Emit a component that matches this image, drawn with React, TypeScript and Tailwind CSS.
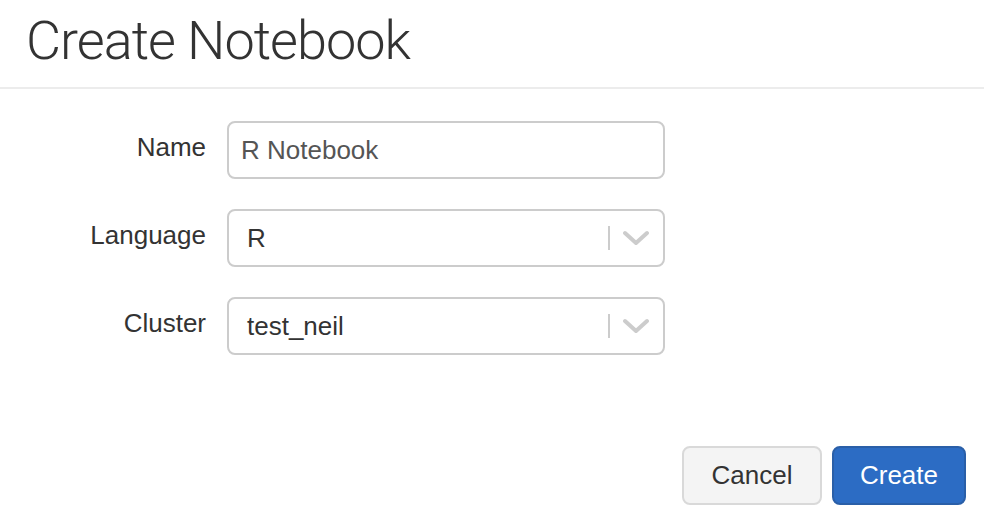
import React from "react";

function Chevron() {
  return (
    <svg width="26" height="16" viewBox="0 0 26 16" className="block">
      <path d="M2 3 L13 13 L24 3" fill="none" stroke="#cccccc" strokeWidth="4" strokeLinecap="round" strokeLinejoin="round" />
    </svg>
  );
}

function Row({ label, children }: { label: string; children: React.ReactNode }) {
  return (
    <div className="flex items-center h-[58px]">
      <div className="w-[206px] text-right text-[26px] text-[#333333] pb-[5px]">{label}</div>
      <div className="ml-[21px] w-[438px] h-full">{children}</div>
    </div>
  );
}

function Select({ value }: { value: string }) {
  return (
    <div className="h-full w-full rounded-[8px] border-2 border-[#cccccc] bg-white flex items-center">
      <div className="flex-1 pl-[18px] text-[26px] text-[#333333]">{value}</div>
      <div className="w-[2px] h-[24px] bg-[#cccccc]" />
      <div className="pl-[13px] pr-[14px] flex items-center">
        <Chevron />
      </div>
    </div>
  );
}

export default function App() {
  return (
    <div className="w-[984px] h-[530px] bg-white overflow-hidden flex flex-col" style={{ fontFamily: '"Liberation Sans", Arial, sans-serif' }}>
      <div className="h-[89px] border-b-2 border-[#ececec] pl-[26px] flex items-center shrink-0">
        <h1 className="text-[54px] leading-none text-[#333333] font-light tracking-[-1px] pb-[6px]" style={{ fontFamily: 'Roboto, "Liberation Sans", sans-serif' }}>
          Create Notebook
        </h1>
      </div>
      <div className="pt-[32px] flex flex-col gap-[30px]">
        <Row label="Name">
          <div className="h-full w-full rounded-[8px] border-2 border-[#cccccc] bg-white flex items-center pl-[12px] text-[26px] text-[#555555]">
            R Notebook
          </div>
        </Row>
        <Row label="Language">
          <Select value="R" />
        </Row>
        <Row label="Cluster">
          <Select value="test_neil" />
        </Row>
      </div>
      <div className="flex-1" />
      <div className="flex justify-end gap-[10px] pr-[18px] pb-[25px]">
        <button className="w-[140px] h-[59px] rounded-[8px] border-2 border-[#d9d9d9] bg-[#f4f4f4] text-[26px] text-[#333333]">
          Cancel
        </button>
        <button className="w-[134px] h-[59px] rounded-[8px] border-2 border-[#2a5fa8] bg-[#2c6cc4] text-[26px] text-white">
          Create
        </button>
      </div>
    </div>
  );
}
